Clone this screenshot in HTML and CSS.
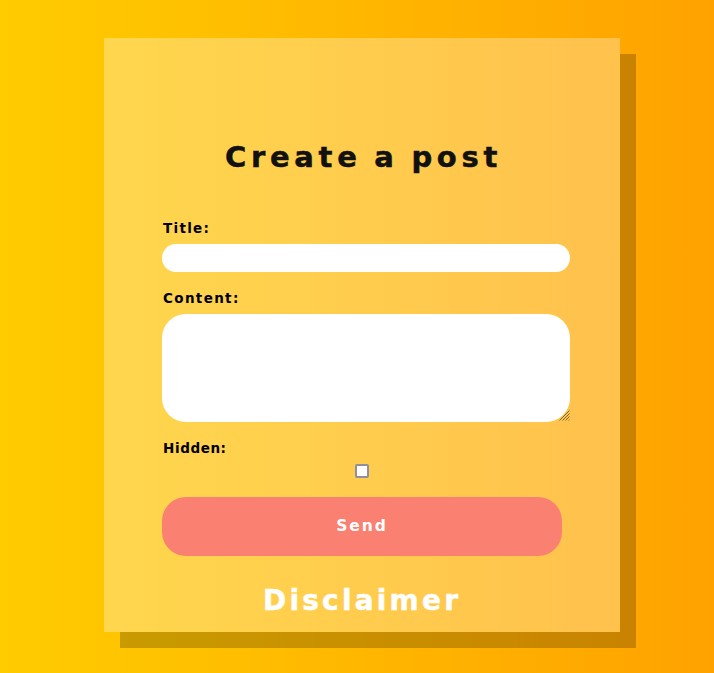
FILE: index.html
```html
<!DOCTYPE html>
<html lang="en">
<head>
<meta charset="utf-8">
<title>Create a post</title>
<link rel="stylesheet" href="styles.css">
</head>
<body>
<main class="card">
  <h1 class="heading">Create a post</h1>
  <form class="form">
    <label class="label label-title" for="title">Title:</label>
    <input class="input" id="title" type="text">
    <label class="label label-content" for="content">Content:</label>
    <div class="field">
      <textarea class="textarea" id="content"></textarea>
      <svg class="grip" viewBox="0 0 11 11" aria-hidden="true">
        <path d="M.5 10.5l10-10M3.5 10.5l7-7M6.5 10.5l4-4M9.5 10.5l1-1"/>
      </svg>
    </div>
    <label class="label label-hidden" for="hidden">Hidden:</label>
    <input class="checkbox" id="hidden" type="checkbox">
    <button class="send" type="button">Send</button>
  </form>
  <h2 class="disclaimer">Disclaimer</h2>
</main>
</body>
</html>
```
FILE: styles.css
```css
* { box-sizing: border-box; }

html { height: 100%; }

body {
  margin: 0;
  height: 100%;
  padding: 38px 94px 0 104px;
  overflow: hidden;
  background: linear-gradient(to right, #ffcc00, #ffa200);
  font-family: "DejaVu Sans", sans-serif;
  font-weight: 700;
}

.card {
  width: 516px;
  height: 594px;
  padding: 98px 50px 0 58px;
  background: rgba(255, 255, 255, 0.3);
  box-shadow: 16px 16px 0 rgba(0, 0, 0, 0.21);
}

.heading {
  margin: 0 0 40px;
  width: 400px;
  height: 42px;
  padding-left: 63px;
  font-size: 29px;
  line-height: 42px;
  letter-spacing: 4.7px;
  word-spacing: -2px;
  white-space: nowrap;
  color: #111;
  -webkit-text-stroke: 0.5px #111;
}

.form {
  display: flex;
  flex-direction: column;
  align-items: flex-start;
}

.label {
  height: 20px;
  margin-bottom: 6px;
  padding-left: 1px;
  font-size: 13.5px;
  line-height: 20px;
  color: #000;
}

.label-title { letter-spacing: 1.3px; }
.label-content { letter-spacing: 1.35px; }
.label-hidden { letter-spacing: 0.6px; }

.input {
  width: 408px;
  height: 28px;
  margin: 0 0 16px;
  border: 0;
  border-radius: 14px;
  background: #fff;
}

.field {
  position: relative;
  width: 408px;
  height: 108px;
  margin-bottom: 16px;
}

.textarea {
  display: block;
  width: 100%;
  height: 100%;
  margin: 0;
  padding: 8px;
  border: 0;
  border-radius: 24px;
  background: #fff;
  resize: none;
}

.grip {
  position: absolute;
  right: 0;
  bottom: 1px;
  width: 11px;
  height: 11px;
  fill: none;
  stroke: #75683f;
  stroke-width: 1;
}

.checkbox {
  appearance: none;
  width: 14px;
  height: 14px;
  margin: 0 0 19px 193px;
  border: 2px solid #8f8f9d;
  border-radius: 2px;
  background: #fff;
}

.send {
  width: 400px;
  height: 59px;
  margin: 0 0 24px;
  padding: 0;
  border: 0;
  border-radius: 24px;
  background: #fa8072;
  color: #fff;
  font: 700 15.5px/59px "DejaVu Sans", sans-serif;
  letter-spacing: 1.9px;
}

.disclaimer {
  width: 400px;
  margin: 0;
  padding-left: 101px;
  font-size: 28px;
  line-height: 42px;
  letter-spacing: 3.2px;
  color: #fff;
  -webkit-text-stroke: 0.5px #fff;
}
```
